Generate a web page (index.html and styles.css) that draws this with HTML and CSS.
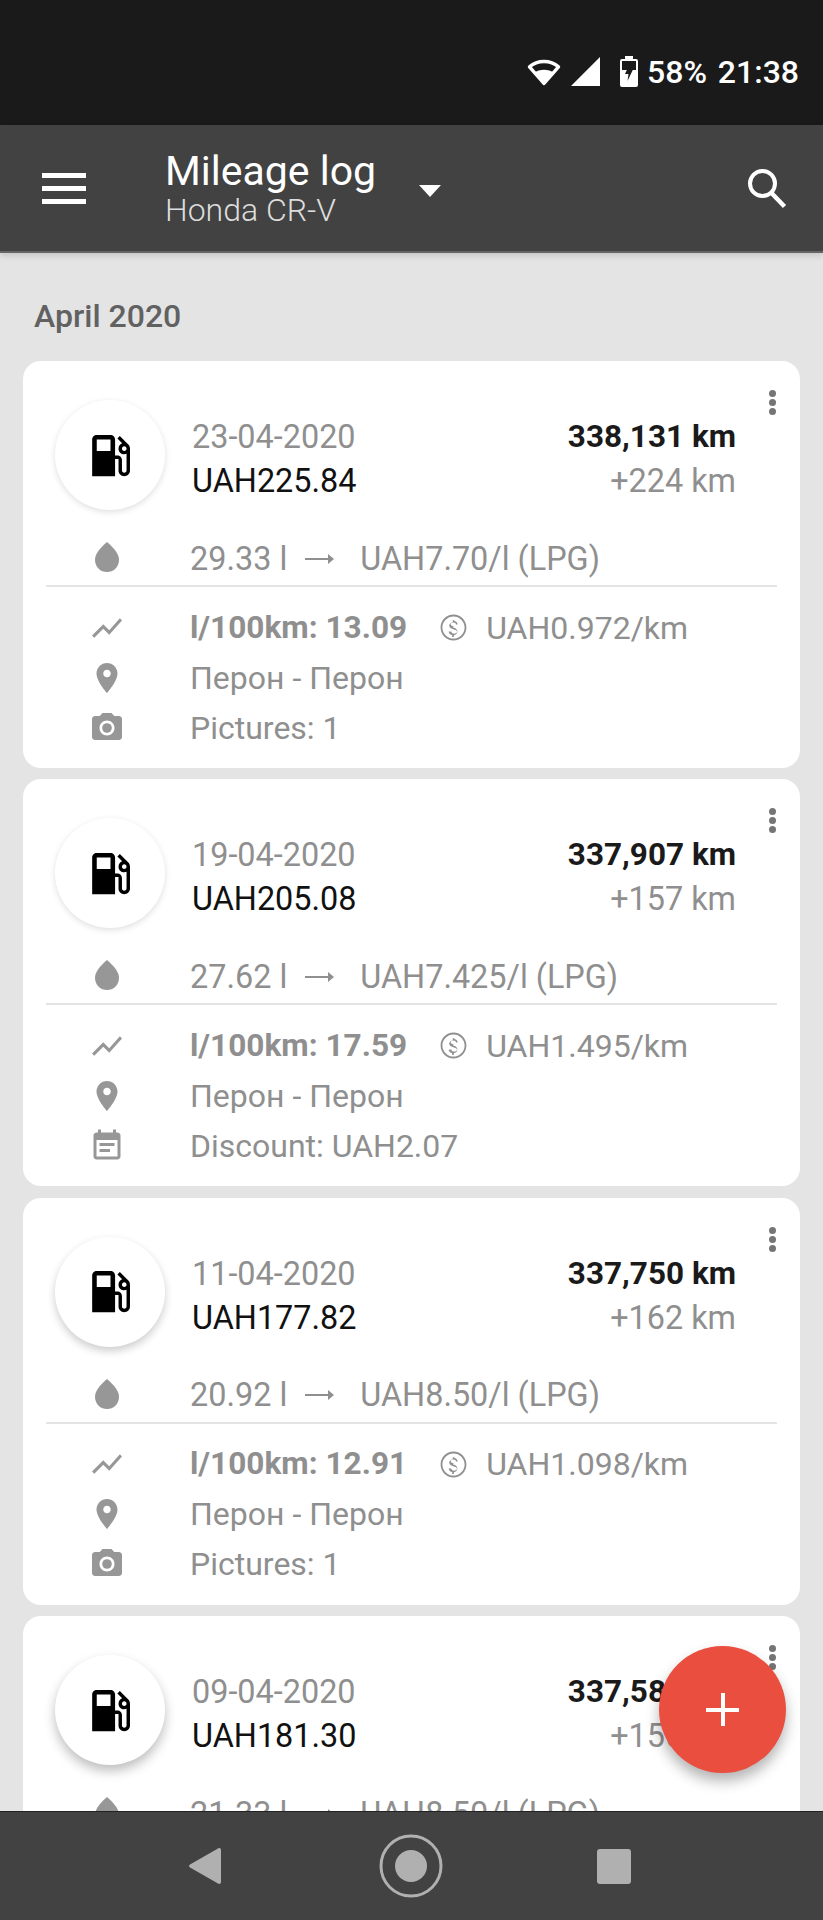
FILE: index.html
```html
<!DOCTYPE html>
<html lang="en">
<head>
    <meta charset="UTF-8">
    <meta name="viewport" content="width=device-width, initial-scale=1.0">
    <title>Mileage log</title>
    <link rel="stylesheet" href="styles.css">
</head>
<body>
    <!-- Icon sprite -->
    <svg class="sprite" aria-hidden="true">
        <symbol id="i-pump" viewBox="0 0 24 24"><path d="M19.77 7.23l.01-.01-3.72-3.72L15 4.56l2.11 2.11c-.94.36-1.61 1.26-1.61 2.33 0 1.38 1.12 2.5 2.5 2.5.36 0 .69-.08 1-.21v7.21c0 .55-.45 1-1 1s-1-.45-1-1V14c0-1.1-.9-2-2-2h-1V5c0-1.1-.9-2-2-2H6c-1.1 0-2 .9-2 2v16h10v-7.5h1.5v5c0 1.38 1.12 2.5 2.5 2.5s2.5-1.12 2.5-2.5V9c0-.69-.28-1.32-.73-1.77zM12 10H6V5h6v5zm6 0c-.55 0-1-.45-1-1s.45-1 1-1 1 .45 1 1-.45 1-1 1z"/></symbol>
        <symbol id="i-drop" viewBox="0 0 24 24"><path d="M12 2c-5.33 4.55-8 8.48-8 11.8 0 4.98 3.8 8.2 8 8.2s8-3.22 8-8.2c0-3.32-2.67-7.25-8-11.8z"/></symbol>
        <symbol id="i-chart" viewBox="0 0 24 24"><path d="M3.5 18.49l6-6.01 4 4L22 6.92l-1.41-1.41-7.09 7.97-4-4L2 16.99z"/></symbol>
        <symbol id="i-place" viewBox="0 0 24 24"><path d="M12 2C8.13 2 5 5.13 5 9c0 5.25 7 13 7 13s7-7.75 7-13c0-3.87-3.13-7-7-7zm0 9.5c-1.38 0-2.5-1.12-2.5-2.5s1.12-2.5 2.5-2.5 2.5 1.12 2.5 2.5-1.12 2.5-2.5 2.5z"/></symbol>
        <symbol id="i-camera" viewBox="0 0 24 24"><circle cx="12" cy="12" r="3.2"/><path d="M9 2L7.17 4H4c-1.1 0-2 .9-2 2v12c0 1.1.9 2 2 2h16c1.1 0 2-.9 2-2V6c0-1.1-.9-2-2-2h-3.17L15 2H9zm3 15c-2.76 0-5-2.24-5-5s2.24-5 5-5 5 2.24 5 5-2.24 5-5 5z"/></symbol>
        <symbol id="i-note" viewBox="0 0 24 24"><path d="M17 10H7v2h10v-2zm2-7h-1V1h-2v2H8V1H6v2H5c-1.11 0-1.99.9-1.99 2L3 19c0 1.1.89 2 2 2h14c1.1 0 2-.9 2-2V5c0-1.1-.9-2-2-2zm0 16H5V8h14v11zm-5-5H7v2h7v-2z"/></symbol>
        <symbol id="i-money" viewBox="0 0 24 24"><path d="M12 2C6.48 2 2 6.48 2 12s4.48 10 10 10 10-4.48 10-10S17.52 2 12 2zm0 18.600c-4.740 0-8.600-3.860-8.600-8.600S7.260 3.400 12 3.400s8.600 3.860 8.600 8.600-3.860 8.600-8.600 8.600zm.2-9.400c-1.770-.45-2.340-.94-2.340-1.670 0-.84.79-1.430 2.100-1.430 1.380 0 1.900.66 1.940 1.640h1.300c-.05-1.340-.87-2.370-2.490-2.770V6.300h-1.300v1.590c-1.510.32-2.720 1.200-2.720 2.610 0 1.790 1.490 2.490 3.660 3.010 1.950.46 2.340 1.150 2.340 1.870 0 .53-.39 1.390-2.100 1.390-1.600 0-2.230-.72-2.320-1.640H8.300c.1 1.700 1.360 2.460 2.660 2.770v1.400h1.300v-1.370c1.520-.29 2.720-1.160 2.730-2.770-.01-2.200-1.900-2.960-3.660-3.420z"/></symbol>
        <symbol id="i-arrow" viewBox="0 0 30 12"><path d="M1 5h23V1l6 5-6 5V7H1z"/></symbol>
    </svg>

    <div class="phone">
        <!-- Status bar -->
        <div class="status-bar">
            <svg class="st-wifi" viewBox="0 0 34 29">
                <path d="M17 26.5L2.5 9.8C10.5 2.7 23.5 2.7 31.5 9.8z" fill="none" stroke="#fff" stroke-width="3.4" stroke-linejoin="round"/>
                <path d="M17 28L7 16c5.5-4.4 14.5-4.4 20 0z" fill="#fff"/>
            </svg>
            <svg class="st-signal" viewBox="0 0 29 29"><path d="M29 0v29H0z" fill="#fff"/></svg>
            <svg class="st-battery" viewBox="0 0 18 31">
                <path d="M5 0h8v3h3a2 2 0 0 1 2 2v24a2 2 0 0 1-2 2H2a2 2 0 0 1-2-2V5a2 2 0 0 1 2-2h3z" fill="#fff"/>
                <rect x="2" y="5" width="14" height="9" fill="#1a1a1a"/>
                <path d="M10.5 6L5 18h3.500l-1 7L13 13.500H9.500z" fill="#1a1a1a"/>
            </svg>
            <span class="st-text st-percent">58%</span>
            <span class="st-text st-time">21:38</span>
        </div>

        <!-- App bar -->
        <header class="app-bar">
            <div class="burger"><span></span><span></span><span></span></div>
            <div class="titles">
                <div class="title">Mileage log</div>
                <div class="subtitle">Honda CR-V</div>
            </div>
            <div class="caret"></div>
            <svg class="search" viewBox="0 0 40 41">
                <circle cx="15.5" cy="15.5" r="12.5" fill="none" stroke="#fff" stroke-width="4"/>
                <path d="M24.5 25L37.5 38.500" fill="none" stroke="#fff" stroke-width="4.500"/>
            </svg>
        </header>

        <!-- Log list -->
        <main class="content">
            <h2 class="month">April 2020</h2>

            <div class="card">
                <div class="dots"><i></i><i></i><i></i></div>
                <div class="head">
                    <div class="pump"><svg class="pump-icon"><use href="#i-pump"/></svg></div>
                    <div class="when">
                        <div class="muted">23-04-2020</div>
                        <div class="price">UAH225.84</div>
                    </div>
                    <div class="dist">
                        <div class="odo">338,131 km</div>
                        <div class="muted">+224 km</div>
                    </div>
                </div>
                <div class="row fuel">
                    <span class="cell"><svg class="ic ic-drop"><use href="#i-drop"/></svg></span>
                    <span>29.33 l</span><svg class="arrow"><use href="#i-arrow"/></svg><span>UAH7.70/l (LPG)</span>
                </div>
                <div class="divider"></div>
                <div class="row">
                    <span class="cell"><svg class="ic"><use href="#i-chart"/></svg></span>
                    <b class="eco">l/100km: 13.09</b><svg class="ic-money"><use href="#i-money"/></svg><span>UAH0.972/km</span>
                </div>
                <div class="row">
                    <span class="cell"><svg class="ic"><use href="#i-place"/></svg></span>
                    <span>Перон - Перон</span>
                </div>
                <div class="row">
                    <span class="cell"><svg class="ic"><use href="#i-camera"/></svg></span>
                    <span>Pictures: 1</span>
                </div>
            </div>

            <div class="card">
                <div class="dots"><i></i><i></i><i></i></div>
                <div class="head">
                    <div class="pump"><svg class="pump-icon"><use href="#i-pump"/></svg></div>
                    <div class="when">
                        <div class="muted">19-04-2020</div>
                        <div class="price">UAH205.08</div>
                    </div>
                    <div class="dist">
                        <div class="odo">337,907 km</div>
                        <div class="muted">+157 km</div>
                    </div>
                </div>
                <div class="row fuel">
                    <span class="cell"><svg class="ic ic-drop"><use href="#i-drop"/></svg></span>
                    <span>27.62 l</span><svg class="arrow"><use href="#i-arrow"/></svg><span>UAH7.425/l (LPG)</span>
                </div>
                <div class="divider"></div>
                <div class="row">
                    <span class="cell"><svg class="ic"><use href="#i-chart"/></svg></span>
                    <b class="eco">l/100km: 17.59</b><svg class="ic-money"><use href="#i-money"/></svg><span>UAH1.495/km</span>
                </div>
                <div class="row">
                    <span class="cell"><svg class="ic"><use href="#i-place"/></svg></span>
                    <span>Перон - Перон</span>
                </div>
                <div class="row">
                    <span class="cell"><svg class="ic"><use href="#i-note"/></svg></span>
                    <span>Discount: UAH2.07</span>
                </div>
            </div>

            <div class="card">
                <div class="dots"><i></i><i></i><i></i></div>
                <div class="head">
                    <div class="pump pump-low"><svg class="pump-icon"><use href="#i-pump"/></svg></div>
                    <div class="when">
                        <div class="muted">11-04-2020</div>
                        <div class="price">UAH177.82</div>
                    </div>
                    <div class="dist">
                        <div class="odo">337,750 km</div>
                        <div class="muted">+162 km</div>
                    </div>
                </div>
                <div class="row fuel">
                    <span class="cell"><svg class="ic ic-drop"><use href="#i-drop"/></svg></span>
                    <span>20.92 l</span><svg class="arrow"><use href="#i-arrow"/></svg><span>UAH8.50/l (LPG)</span>
                </div>
                <div class="divider"></div>
                <div class="row">
                    <span class="cell"><svg class="ic"><use href="#i-chart"/></svg></span>
                    <b class="eco">l/100km: 12.91</b><svg class="ic-money"><use href="#i-money"/></svg><span>UAH1.098/km</span>
                </div>
                <div class="row">
                    <span class="cell"><svg class="ic"><use href="#i-place"/></svg></span>
                    <span>Перон - Перон</span>
                </div>
                <div class="row">
                    <span class="cell"><svg class="ic"><use href="#i-camera"/></svg></span>
                    <span>Pictures: 1</span>
                </div>
            </div>

            <div class="card">
                <div class="dots"><i></i><i></i><i></i></div>
                <div class="head">
                    <div class="pump pump-lower"><svg class="pump-icon"><use href="#i-pump"/></svg></div>
                    <div class="when">
                        <div class="muted">09-04-2020</div>
                        <div class="price">UAH181.30</div>
                    </div>
                    <div class="dist">
                        <div class="odo">337,588 km</div>
                        <div class="muted">+155 km</div>
                    </div>
                </div>
                <div class="row fuel">
                    <span class="cell"><svg class="ic ic-drop"><use href="#i-drop"/></svg></span>
                    <span>21.33 l</span><svg class="arrow"><use href="#i-arrow"/></svg><span>UAH8.50/l (LPG)</span>
                </div>
            </div>
        </main>

        <!-- Add button -->
        <div class="fab"><span class="fab-h"></span><span class="fab-v"></span></div>

        <!-- Navigation bar -->
        <nav class="nav-bar">
            <svg class="nav-back" viewBox="0 0 32 38"><path d="M29 1.5c1.5-1 3-.3 3 1.500v32c0 1.800-1.500 2.500-3 1.500L1 20.500c-1.300-.8-1.300-2.200 0-3z" fill="#b0b0b0"/></svg>
            <svg class="nav-home" viewBox="0 0 64 64">
                <circle cx="32" cy="32" r="30" fill="none" stroke="#b0b0b0" stroke-width="3"/>
                <circle cx="32" cy="32" r="16" fill="#b0b0b0"/>
            </svg>
            <div class="nav-square"></div>
        </nav>
    </div>
</body>
</html>
```
FILE: styles.css
```css
*{
    box-sizing: border-box;
}
body{
    margin: 0;
    font-family: Roboto, "Liberation Sans", sans-serif;
}
.sprite{
    display: none;
}
.phone{
    position: relative;
    width: 823px;
    height: 1920px;
    display: flex;
    flex-direction: column;
    overflow: hidden;
    background-color: #e4e4e4;
}

/* Status bar */
.status-bar{
    height: 125px;
    flex: none;
    background-color: #1a1a1a;
    display: flex;
    align-items: flex-start;
    padding: 56px 24px 0 527px;
    color: #fff;
}
.st-wifi{
    width: 34px;
    height: 29px;
    margin-top: 1px;
}
.st-signal{
    width: 29px;
    height: 29px;
    margin: 1px 0 0 10px;
}
.st-battery{
    width: 18px;
    height: 31px;
    margin-left: 20px;
}
.st-text{
    font-size: 32px;
    font-weight: 500;
    line-height: 32px;
}
.st-percent{
    margin-left: 9px;
}
.st-time{
    margin-left: auto;
}

/* App bar */
.app-bar{
    height: 128px;
    flex: none;
    position: relative;
    z-index: 1;
    background-color: #424242;
    border-bottom: 2px solid #666;
    box-shadow: 0 3px 6px rgba(0, 0, 0, 0.12);
    display: flex;
    align-items: center;
    color: #fff;
}
.burger{
    width: 44px;
    margin-left: 42px;
    display: flex;
    flex-direction: column;
    gap: 8px;
}
.burger span{
    height: 5px;
    background-color: #fff;
}
.titles{
    margin-left: 79px;
}
.title{
    font-size: 41px;
    line-height: 44px;
}
.subtitle{
    font-size: 32px;
    line-height: 34px;
    font-weight: 300;
    color: #ddd;
}
.caret{
    width: 0;
    height: 0;
    margin: 6px 0 0 43px;
    border-left: 11px solid transparent;
    border-right: 11px solid transparent;
    border-top: 12px solid #fff;
}
.search{
    width: 40px;
    height: 41px;
    margin-left: auto;
    margin-right: 36px;
}

/* List */
.content{
    flex: 1;
    min-height: 0;
    overflow: hidden;
    padding: 0 23px;
}
.month{
    margin: 0;
    padding: 43px 0 0 11px;
    height: 108px;
    font-size: 32px;
    line-height: 40px;
    font-weight: 500;
    color: #616161;
}
.card{
    position: relative;
    height: 407px;
    margin-bottom: 11.4px;
    padding-top: 39px;
    background-color: #fff;
    border-radius: 18px;
    color: #8f8f8f;
}
.dots{
    position: absolute;
    top: 29px;
    right: 24px;
    display: flex;
    flex-direction: column;
    gap: 2px;
}
.dots i{
    width: 7px;
    height: 7px;
    border-radius: 50%;
    background-color: #757575;
}
.head{
    display: flex;
    align-items: center;
    font-size: 32.4px;
    line-height: 44px;
}
.pump{
    width: 110px;
    height: 110px;
    margin-left: 32px;
    border-radius: 50%;
    background-color: #fff;
    box-shadow: 0 2px 6px rgba(0, 0, 0, 0.13);
    display: flex;
    align-items: center;
    justify-content: center;
}
.pump-low{
    box-shadow: 0 4px 9px rgba(0, 0, 0, 0.2);
}
.pump-lower{
    box-shadow: 0 6px 12px rgba(0, 0, 0, 0.26);
}
.pump-icon{
    width: 55px;
    height: 55px;
    fill: #000;
}
.when{
    margin-left: 27px;
    padding-top: 8px;
}
.price{
    color: #111;
}
.dist{
    margin-left: auto;
    margin-right: 64px;
    padding-top: 8px;
    text-align: right;
}
.odo{
    font-size: 31.5px;
    font-weight: 700;
    color: #1a1a1a;
}
.row{
    height: 50px;
    display: flex;
    align-items: center;
    font-size: 32px;
    line-height: 50px;
    white-space: nowrap;
    padding-top: 1px;
}
.fuel{
    margin-top: 23px;
    font-size: 32.4px;
}
.cell{
    width: 167px;
    flex: none;
    padding-left: 66px;
    display: flex;
}
.ic{
    width: 36px;
    height: 36px;
    fill: #979797;
}
.ic-drop{
    margin-top: -3px;
}
.arrow{
    width: 30px;
    height: 12px;
    margin: 0 26px 0 17px;
    fill: #8f8f8f;
}
.eco{
    font-weight: 700;
    font-size: 31.6px;
}
.ic-money{
    width: 31px;
    height: 31px;
    margin: 0 17px 0 31px;
    fill: #8f8f8f;
}
.divider{
    height: 2px;
    margin: 2px 23px 15px 23px;
    background-color: #e4e4e4;
}

/* FAB */
.fab{
    position: absolute;
    left: 659px;
    top: 1646px;
    width: 127px;
    height: 127px;
    border-radius: 50%;
    background-color: #e94e3f;
    box-shadow: 0 8px 14px rgba(0, 0, 0, 0.3);
}
.fab-h,
.fab-v{
    position: absolute;
    background-color: #fff;
}
.fab-h{
    left: 47px;
    top: 62px;
    width: 33px;
    height: 4px;
}
.fab-v{
    left: 62px;
    top: 47px;
    width: 4px;
    height: 33px;
}

/* Navigation bar */
.nav-bar{
    height: 109px;
    flex: none;
    position: relative;
    background-color: #424242;
    border-top: 1px solid #222;
    display: flex;
    align-items: center;
    padding-left: 189px;
}
.nav-back{
    width: 32px;
    height: 38px;
}
.nav-home{
    width: 64px;
    height: 64px;
    margin-left: 158px;
}
.nav-square{
    width: 34px;
    height: 35px;
    margin-left: 154px;
    border-radius: 3px;
    background-color: #b0b0b0;
}
```
